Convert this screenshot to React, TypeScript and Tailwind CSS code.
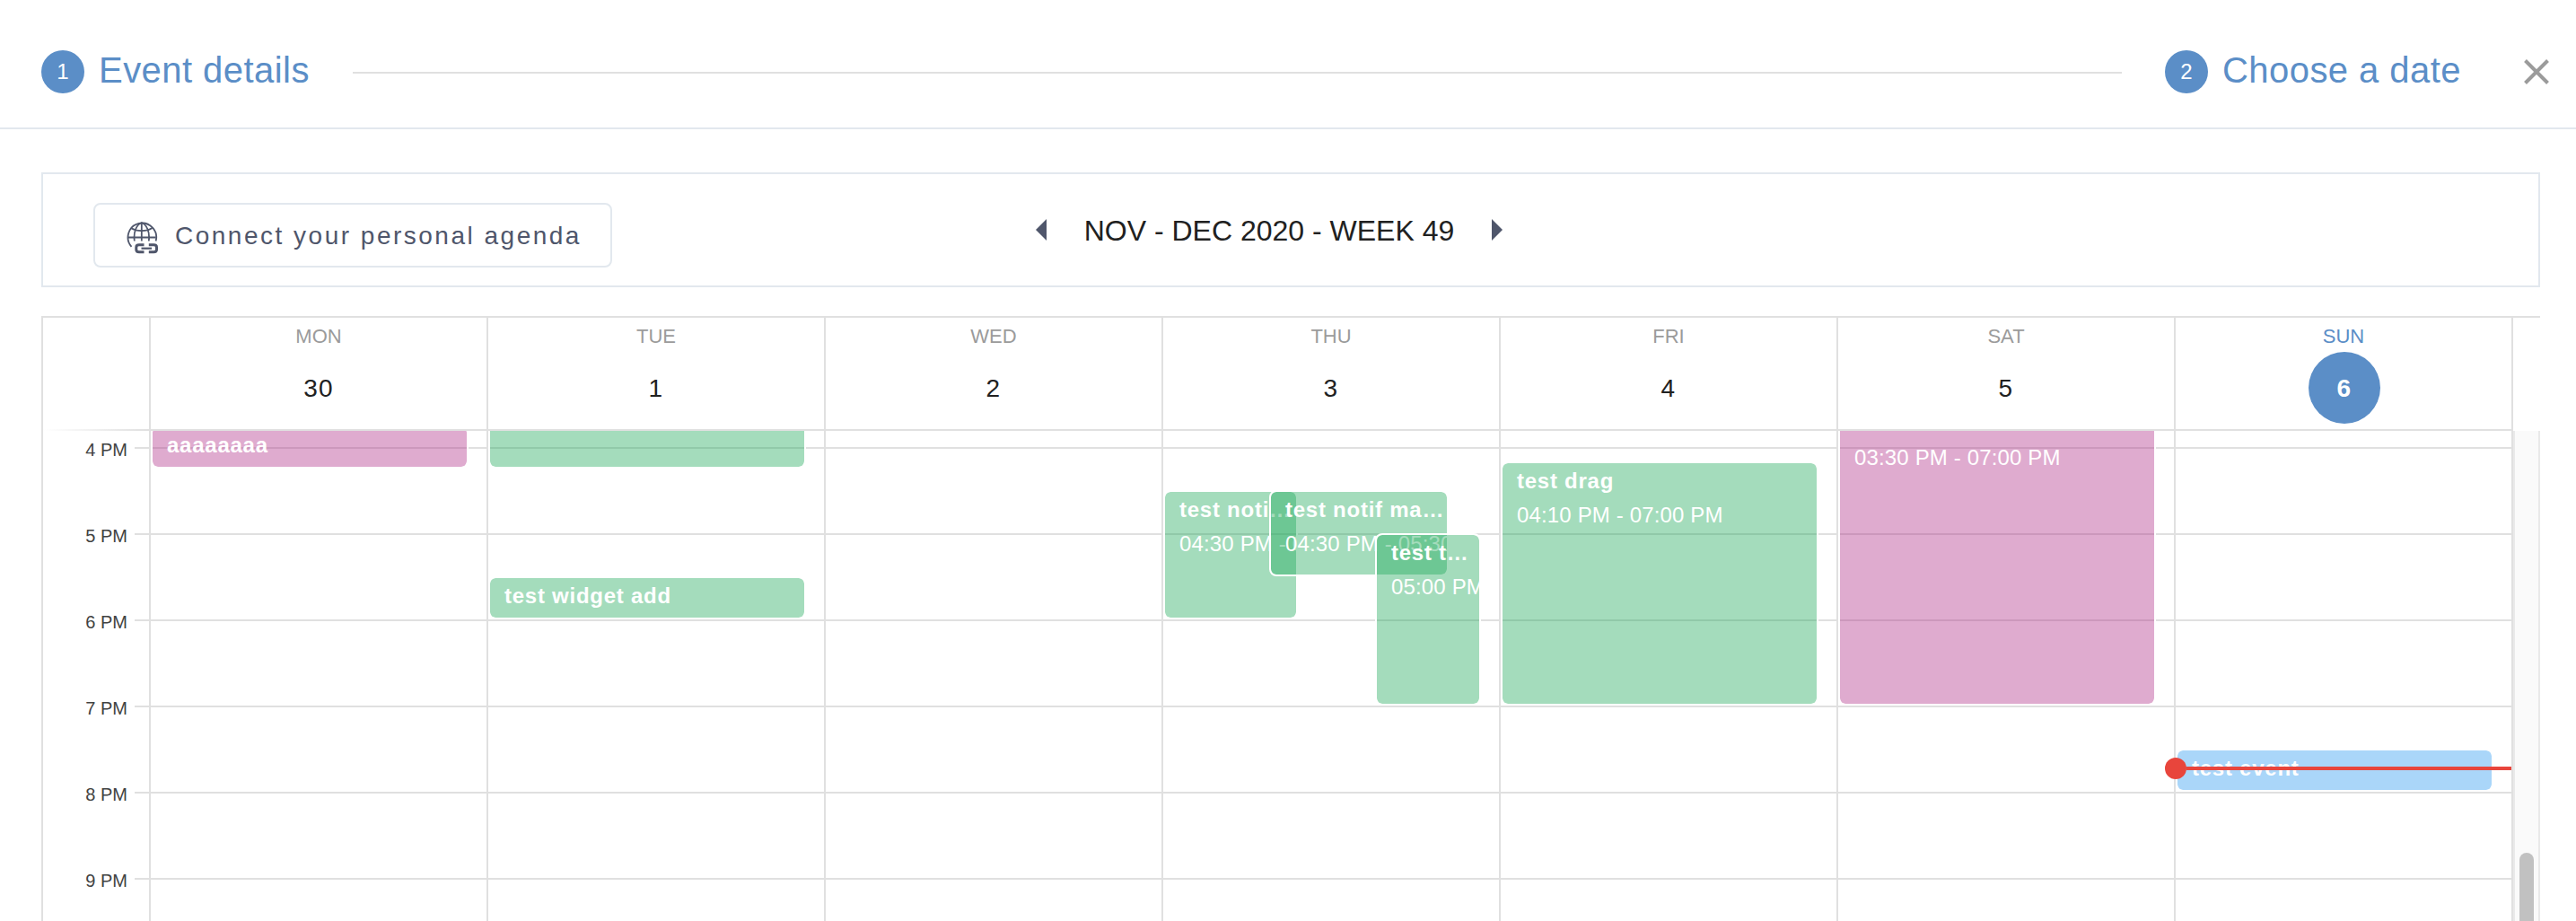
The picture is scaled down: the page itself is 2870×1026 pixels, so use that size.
import React from "react";

type Tone = "green" | "pink" | "blue";

interface CalendarEvent {
  title: string;
  time?: string;
  tone: Tone;
  top: number;
  height: number;
  left: number;
  width: number;
}

interface Day {
  name: string;
  date: string;
  today?: boolean;
  events: CalendarEvent[];
}

const TONES: Record<Tone, string> = {
  green: "bg-[rgba(28,168,88,0.4)]",
  pink: "bg-[rgba(175,45,135,0.4)]",
  blue: "bg-[rgba(42,152,240,0.4)]",
};

/* Event offsets are measured from the top of the visible time grid. */
const DAYS: Day[] = [
  { name: "MON", date: "30", events: [{ title: "aaaaaaaa", tone: "pink", top: -4, height: 44, left: 2, width: 350 }] },
  {
    name: "TUE",
    date: "1",
    events: [
      { title: "test notif", tone: "green", top: -28, height: 68, left: 2, width: 350 },
      { title: "test widget add", tone: "green", top: 164, height: 44, left: 2, width: 350 },
    ],
  },
  { name: "WED", date: "2", events: [] },
  {
    name: "THU",
    date: "3",
    events: [
      { title: "test notification", time: "04:30 PM - 06:00 PM", tone: "green", top: 68, height: 140, left: 2, width: 146 },
      { title: "test notif manager", time: "04:30 PM - 05:30 PM", tone: "green", top: 68, height: 92, left: 120, width: 196 },
      { title: "test three", time: "05:00 PM - 07:00 PM", tone: "green", top: 116, height: 188, left: 238, width: 114 },
    ],
  },
  {
    name: "FRI",
    date: "4",
    events: [{ title: "test drag", time: "04:10 PM - 07:00 PM", tone: "green", top: 36, height: 268, left: 2, width: 350 }],
  },
  {
    name: "SAT",
    date: "5",
    events: [{ title: "fe", time: "03:30 PM - 07:00 PM", tone: "pink", top: -28, height: 332, left: 2, width: 350 }],
  },
  {
    name: "SUN",
    date: "6",
    today: true,
    events: [{ title: "test event", tone: "blue", top: 356, height: 44, left: 2, width: 350 }],
  },
];

const HOURS = ["4 PM", "5 PM", "6 PM", "7 PM", "8 PM", "9 PM"];

function Step({ number, label }: { number: number; label: string }) {
  return (
    <div className="flex shrink-0 items-center">
      <span className="flex size-12 items-center justify-center rounded-full bg-[#5b8ec7] text-[24px] leading-none text-white">
        {number}
      </span>
      <span className="relative -top-[2px] ml-4 text-[40px] leading-[48px] tracking-[0.45px] text-[#5b8ec7]">{label}</span>
    </div>
  );
}

function GlobeLinkIcon() {
  return (
    <svg className="relative top-[2px]" width="36" height="37" viewBox="0 0 36 37" fill="none" stroke="#4f566b" strokeWidth="1.8">
      <path d="M5.500 28.800A15.800 15.800 0 1 1 32.600 22.500" />
      <path d="M8.800 22.500C7.500 12 11 4.500 16.800 2C22.600 4.500 26.100 12 24.800 22.500" />
      <path d="M16.800 2V22.500M1 18.500H32.600M5 8C11.500 12.200 22.100 12.200 28.600 8" />
      <path
        d="M19.500 26.800H14Q10.800 26.800 10.800 29.500V32Q10.800 34.700 14 34.700H19.500M24.800 26.800H30.200Q33.500 26.800 33.500 29.500V32Q33.500 34.700 30.200 34.700H24.800"
        strokeWidth="3"
      />
      <path d="M16.500 30.700H28" strokeWidth="2.200" />
    </svg>
  );
}

function EventCard({ event }: { event: CalendarEvent }) {
  return (
    <div
      className={`absolute box-content overflow-hidden rounded-[8px] border-2 border-white bg-clip-padding text-[24px] text-white ${TONES[event.tone]}`}
      style={{ top: event.top - 2, left: event.left - 2, width: event.width, height: event.height }}
    >
      <div className="mt-[2px] truncate pl-4 leading-[36px] font-bold tracking-[0.75px]">{event.title}</div>
      {event.time && <div className="mt-[2px] pl-4 leading-[36px] tracking-[0.15px] whitespace-nowrap">{event.time}</div>}
    </div>
  );
}

function DayHeader({ day }: { day: Day }) {
  return (
    <div className="flex h-full flex-col items-center border-r-2 border-[#e0e0e0]">
      <span className={`mt-[6px] pt-px text-[22px] leading-[27px] ${day.today ? "text-[#5b8ec7]" : "text-[#9b9b9b]"}`}>{day.name}</span>
      <span
        className={`mt-1 flex size-20 items-center justify-center rounded-full pt-px text-[28px] tracking-[1.2px] ${
          day.today ? "relative left-px bg-[#5b8ec7] font-bold text-white" : "text-[#212121]"
        }`}
      >
        {day.date}
      </span>
    </div>
  );
}

function DayColumn({ day }: { day: Day }) {
  return (
    <div className="relative border-r-2 border-[#e0e0e0]">
      <div className="h-5 border-b-2 border-[#e0e0e0]" />
      {HOURS.slice(1).map((hour) => (
        <div key={hour} className="h-24 border-b-2 border-[#e0e0e0]" />
      ))}
      {day.events.map((event) => (
        <EventCard key={event.title} event={event} />
      ))}
      {day.today && (
        <div className="absolute top-[364px] right-0 -left-[12px] flex h-6 items-center">
          <span className="size-6 rounded-full bg-[#e8453c]" />
          <span className="h-1 flex-1 bg-[#e8453c]" />
        </div>
      )}
    </div>
  );
}

export default function App() {
  return (
    <div className="flex h-[1026px] w-[2870px] flex-col overflow-hidden bg-white font-['Helvetica_Neue','Liberation_Sans',Arial,sans-serif]">
      <header className="flex h-[144px] shrink-0 items-center border-b-2 border-[#e2e8ee] pt-[18px] pr-[30px] pl-[46px]">
        <Step number={1} label="Event details" />
        <div className="mt-[2px] mr-12 ml-12 h-[2px] flex-1 bg-[#e0e0e0]" />
        <Step number={2} label="Choose a date" />
        <svg className="ml-[70px]" width="28" height="28" viewBox="0 0 28 28" stroke="#9b9b9b" strokeWidth="4">
          <path d="M1.500 1.500 26.500 26.500M26.500 1.500 1.500 26.500" />
        </svg>
      </header>

      <section className="mx-[46px] mt-12 mr-10 grid h-[128px] shrink-0 grid-cols-[1fr_auto_1fr] border-2 border-[#e2e8ee]">
        <div className="pt-8 pl-14">
          <button className="flex h-[72px] w-[578px] items-center rounded-[8px] border-2 border-[#e2e8ee] pl-[35px] text-[28px] tracking-[2.5px] text-[#4f566b]">
            <GlobeLinkIcon />
            <span className="ml-[18px] pt-[2px] whitespace-nowrap">Connect your personal agenda</span>
          </button>
        </div>
        <div className="relative -left-[24px] flex h-[124px] items-center pb-[2px]">
          <svg className="mt-[2px]" width="12" height="24" viewBox="0 0 12 24" fill="#4f566b">
            <path d="M12 0V24L0 12Z" />
          </svg>
          <span className="mx-[42px] pt-1 text-[32px] leading-none whitespace-nowrap text-[#212121]">NOV - DEC 2020 - WEEK 49</span>
          <svg className="mt-[2px]" width="12" height="24" viewBox="0 0 12 24" fill="#4f566b">
            <path d="M0 0V24L12 12Z" />
          </svg>
        </div>
      </section>

      <main className="mt-8 mr-10 ml-[46px] flex min-h-0 flex-1 flex-col border-t-2 border-l-2 border-[#e0e0e0]">
        <div className="flex h-[126px] shrink-0">
          <div className="flex w-[120px] flex-col justify-end border-r-2 border-[#e0e0e0]">
            <div className="h-[2px] bg-gradient-to-r from-white to-[#e0e0e0]" />
          </div>
          <div className="grid w-[2632px] grid-cols-7 border-b-2 border-[#e0e0e0]">
            {DAYS.map((day) => (
              <DayHeader key={day.name} day={day} />
            ))}
          </div>
        </div>
        <div className="flex min-h-0 flex-1 overflow-hidden">
          <div className="w-[120px] shrink-0 border-r-2 border-[#e0e0e0] pt-[2px]">
            {HOURS.map((hour) => (
              <div key={hour} className="flex h-24 items-start justify-end">
                <span className="mt-[3px] text-[20px] leading-8 text-[#424242]">{hour}</span>
                <span className="mt-4 ml-2 h-[2px] w-4 bg-[#e0e0e0]" />
              </div>
            ))}
          </div>
          <div className="grid w-[2632px] shrink-0 grid-cols-7">
            {DAYS.map((day) => (
              <DayColumn key={day.name} day={day} />
            ))}
          </div>
          <div className="flex flex-1 flex-col items-center border-r-2 border-l-2 border-[#e9e9e9] bg-[#fafafa]">
            <div className="mt-[470px] h-[200px] w-4 shrink-0 rounded-full bg-[#c1c1c1]" />
          </div>
        </div>
      </main>
    </div>
  );
}
